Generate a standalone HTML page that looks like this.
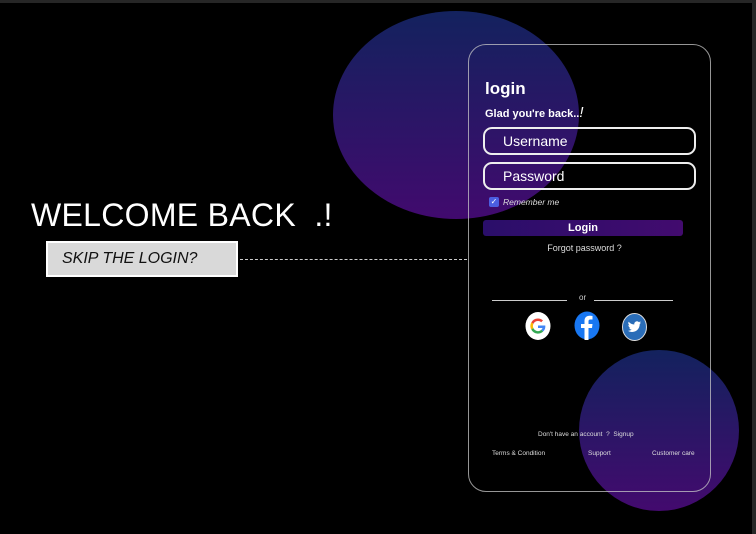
<!DOCTYPE html>
<html><head><style>
*{margin:0;padding:0;box-sizing:border-box}
body{width:756px;height:534px;background:#000;position:relative;overflow:hidden;font-family:"Liberation Sans",sans-serif;color:#fff}
.top{position:absolute;left:0;top:0;width:756px;height:3px;background:#262626}
.right{position:absolute;left:752px;top:0;width:4px;height:534px;background:#262626}
.c1{position:absolute;left:333px;top:11px;width:246px;height:208px;border-radius:50%;background:linear-gradient(#13225e,#410a6e)}
.c2{position:absolute;left:579px;top:350px;width:160px;height:161px;border-radius:50%;background:linear-gradient(#13225e,#430a6e)}
.card{position:absolute;left:468px;top:44px;width:243px;height:448px;border:1px solid rgba(200,200,200,.75);border-radius:18px}
.abs{position:absolute}
.inp{position:absolute;left:483px;width:213px;height:28px;border:2px solid #eee;border-radius:9px;font-size:14px;padding-left:18px;line-height:24px}
</style></head><body>
<div class="top"></div><div class="right"></div>
<div class="c1"></div><div class="c2"></div>
<div class="card"></div>
<div class="abs" style="left:485px;top:79px;font-size:17px;font-weight:bold">login</div>
<div class="abs" style="left:485px;top:104px;font-size:11px;font-weight:bold">Glad you're back..<span style="font-style:italic;font-size:15px;font-weight:normal">!</span></div>
<div class="inp" style="top:127px">Username</div>
<div class="inp" style="top:162px">Password</div>
<div class="abs" style="left:489px;top:197px;width:10px;height:10px;background:#4b5ee0;border-radius:2px;font-size:8px;line-height:10px;text-align:center">✓</div>
<div class="abs" style="left:503px;top:197px;font-size:8.5px;font-style:italic;color:#ddd">Remember me</div>
<div class="abs" style="left:483px;top:220px;width:200px;height:16px;border-radius:3px;background:linear-gradient(90deg,#2a0e6a,#420b6e);font-size:11px;font-weight:bold;text-align:center;line-height:16px">Login</div>
<div class="abs" style="left:483px;top:243px;width:203px;text-align:center;font-size:9px;color:#ddd">Forgot password ?</div>
<div class="abs" style="left:492px;top:300px;width:75px;height:1px;background:#ccc"></div>
<div class="abs" style="left:594px;top:300px;width:79px;height:1px;background:#ccc"></div>
<div class="abs" style="left:579px;top:293px;font-size:8px;color:#ccc">or</div>
<svg class="abs" style="left:525px;top:312px" width="26" height="28" viewBox="0 0 26 28"><ellipse cx="13" cy="14" rx="12.5" ry="14" fill="#fff"/>
<path d="M19 14.5H13v2.5h3.3c-.5 1.600-1.800 2.500-3.300 2.500a5 5 0 1 1 3.200-8.800l1.800-1.800A7.500 7.500 0 1 0 20.500 14c0-.5 0-1-.1-1.500" fill="none" stroke="#ea4335" stroke-width="0"/>
<path d="M13 6.5a7.500 7.500 0 0 1 5 1.900l-1.800 1.800A5 5 0 0 0 8.300 12L6.300 10.400A7.500 7.500 0 0 1 13 6.500z" fill="#ea4335"/>
<path d="M6.300 10.400 8.300 12a5 5 0 0 0 0 4L6.300 17.600a7.500 7.500 0 0 1 0-7.200z" fill="#fbbc05"/>
<path d="M6.300 17.600 8.300 16A5 5 0 0 0 16.300 17.800l2 1.600A7.500 7.500 0 0 1 6.300 17.600z" fill="#34a853"/>
<path d="M18.300 19.400l-2-1.600c.6-.5 1-1.100 1.200-1.800H13v-2.500h7.300c.3 2.300-.4 4.400-2 5.900z" fill="#4285f4"/></svg>
<svg class="abs" style="left:574px;top:311px" width="26" height="29" viewBox="0 0 26 29"><ellipse cx="13" cy="14.5" rx="12.5" ry="14" fill="#1877f2"/><path d="M14.500 29V17h3.500l.5-4h-4v-2.500c0-1.200.4-2 2-2h2V5c-.4 0-1.600-.2-3-.2-3 0-5 1.800-5 5.200V13H7v4h3.500v12z" fill="#fff"/></svg>
<svg class="abs" style="left:622px;top:313px" width="25" height="28" viewBox="0 0 25 28"><ellipse cx="12.5" cy="14" rx="12" ry="13.5" fill="#2a6db8" stroke="#ddd" stroke-width="1"/><path d="M19 9.500c-.5.2-1 .4-1.600.4.6-.3 1-.9 1.200-1.500-.5.3-1.100.5-1.700.7a2.700 2.700 0 0 0-4.600 2.400C10 11.400 8 10.300 6.700 8.700c-.8 1.300-.3 2.800.8 3.600-.4 0-.8-.1-1.200-.3 0 1.300.9 2.400 2.100 2.700-.4.1-.8.1-1.200 0 .3 1.100 1.300 1.900 2.500 1.900A5.500 5.500 0 0 1 5.800 17.800c1.200.8 2.700 1.200 4.200 1.200 5 0 7.800-4.200 7.700-8 .5-.4 1-.9 1.300-1.500z" fill="#fff"/></svg>
<div class="abs" style="left:538px;top:431px;font-size:6.5px;color:#ddd">Don't have an account &nbsp;? &nbsp;Signup</div>
<div class="abs" style="left:492px;top:450px;font-size:6.5px;color:#ddd">Terms &amp; Condition</div>
<div class="abs" style="left:588px;top:450px;font-size:6.5px;color:#ddd">Support</div>
<div class="abs" style="left:652px;top:450px;font-size:6.5px;color:#ddd">Customer care</div>
<div class="abs" style="left:31px;top:197px;font-size:32px;letter-spacing:0.3px">WELCOME BACK &nbsp;.!</div>
<div class="abs" style="left:46px;top:241px;width:192px;height:36px;background:#d9d9d9;border:2px solid #fff;color:#111;font-size:16px;font-style:italic;padding-left:14px;line-height:32px">SKIP THE LOGIN?</div>
<div class="abs" style="left:240px;top:259px;width:227px;border-top:1.5px dashed #ccc"></div>
</body></html>
